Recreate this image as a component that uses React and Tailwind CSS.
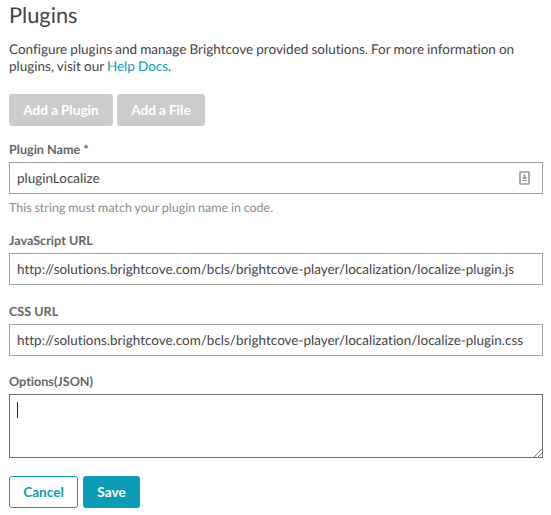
const inputBase = "flex h-8 items-center justify-between whitespace-nowrap border border-[#a0a0a0] bg-white pl-[7px] pr-3 pt-px text-[13.48px] leading-[17px] text-[#444]";

function Label({ children }) {
  return <label className="block h-[17px] text-[12.6px] font-bold leading-[17px] text-[#666]">{children}</label>;
}

function FieldIcon() {
  return (
    <svg width="11" height="14" viewBox="0 0 11 14" fill="none" className="-mt-px">
      <rect x="1" y="1" width="9" height="12" rx="0.5" stroke="#999" strokeWidth="1.6" />
      <path d="M4.5 3.5h2v3h-2zM3.5 6h4v2h-4z" fill="#999" />
      <path d="M3 9.5h5" stroke="#999" />
    </svg>
  );
}

export default function App() {
  return (
    <main className="h-[515px] w-[551px] overflow-hidden bg-white pl-[9px] pr-2 font-['Lato',sans-serif] text-[#444] [font-variant-ligatures:none] [text-rendering:geometricPrecision]">
      <h1 className="h-[41px] pt-px text-[21.8px] leading-[28px]">Plugins</h1>
      <p className="h-[53px] whitespace-nowrap text-[13.5px] leading-[17px] [word-spacing:-0.36px]">
        Configure plugins and manage Brightcove provided solutions. For more information on
        <br />
        plugins, visit our <a className="text-[#0c9bb4]">Help Docs</a>.
      </p>
      <div className="flex gap-1">
        <button className="h-8 w-[104px] rounded-[3px] bg-[#ccc] pt-px text-[13.6px] font-bold text-white [word-spacing:-0.3px]">Add a Plugin</button>
        <button className="h-8 w-[88px] rounded-[3px] bg-[#ccc] pt-px text-[13.6px] font-bold text-white [word-spacing:-0.3px]">Add a File</button>
      </div>
      <div className="h-[91px] pt-[15px]">
        <Label>Plugin Name *</Label>
        <div className={inputBase + " mt-1"}>pluginLocalize<FieldIcon /></div>
        <p className="mt-[5px] text-[12.5px] leading-[17px] text-[#8c8c8c] [word-spacing:-0.4px]">This string must match your plugin name in code.</p>
      </div>
      <div className="h-[71px] pt-[15px]">
        <Label>JavaScript URL</Label>
        <div className={inputBase + " mt-1"}>http://solutions.brightcove.com/bcls/brightcove-player/localization/localize-plugin.js</div>
      </div>
      <div className="h-[71px] pt-[15px]">
        <Label>CSS URL</Label>
        <div className={inputBase + " mt-1"}>http://solutions.brightcove.com/bcls/brightcove-player/localization/localize-plugin.css</div>
      </div>
      <div className="pt-[14px]">
        <Label>Options(JSON)</Label>
        <div className="mt-1 flex h-16 items-end justify-between border border-[#707070] pl-[7px]">
          <span className="mb-[39px] h-4 w-px bg-[#222]" />
          <svg width="8" height="8" viewBox="0 0 8 8" stroke="#777"><path d="M0 8 8 0M4 8 8 4" /></svg>
        </div>
      </div>
      <div className="mt-[18px] flex gap-[5px]">
        <button className="h-8 w-[69px] rounded-[3px] border border-[#0c9bb4] pt-px text-[13.6px] font-bold text-[#0c9bb4]">Cancel</button>
        <button className="h-8 w-[57px] rounded-[3px] bg-[#0c9bb4] pt-px text-[13.6px] font-bold text-white">Save</button>
      </div>
    </main>
  );
}
